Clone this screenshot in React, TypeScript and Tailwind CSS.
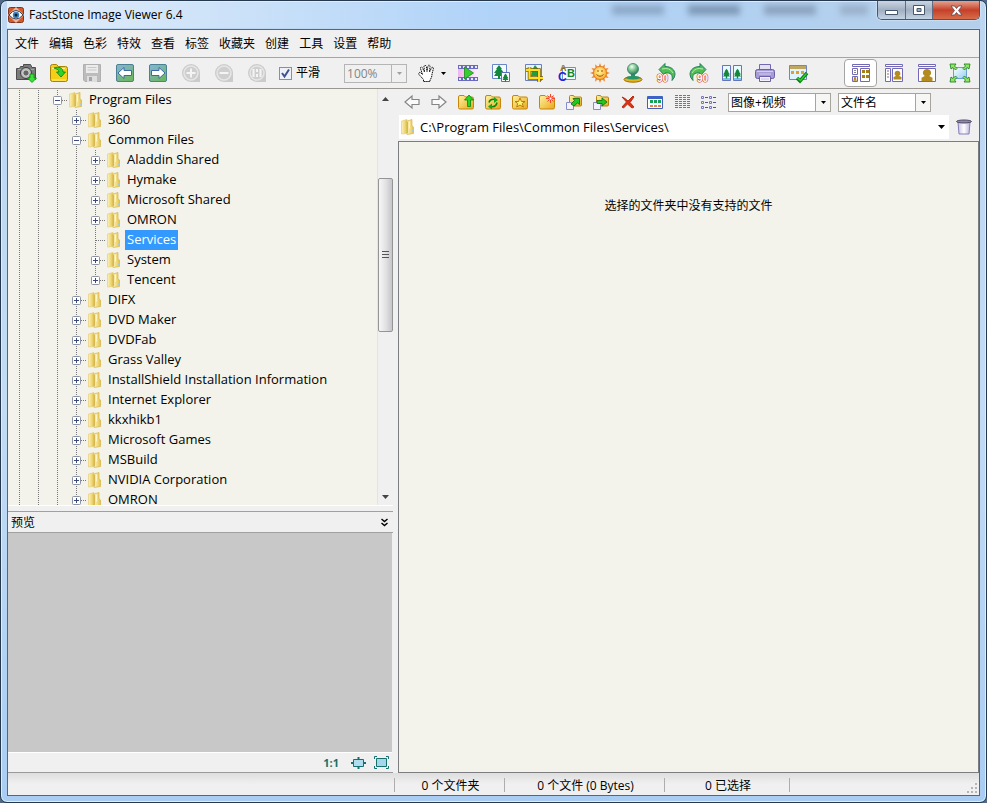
import React, { useState } from "react";

type Row = { name: string; depth: number; open?: boolean; leaf?: boolean; last?: boolean };

const rows: Row[] = [
  { name: "Program Files", depth: 2, open: true },
  { name: "360", depth: 3 },
  { name: "Common Files", depth: 3, open: true },
  { name: "Aladdin Shared", depth: 4 },
  { name: "Hymake", depth: 4 },
  { name: "Microsoft Shared", depth: 4 },
  { name: "OMRON", depth: 4 },
  { name: "Services", depth: 4, leaf: true },
  { name: "System", depth: 4 },
  { name: "Tencent", depth: 4, last: true },
  { name: "DIFX", depth: 3 },
  { name: "DVD Maker", depth: 3 },
  { name: "DVDFab", depth: 3 },
  { name: "Grass Valley", depth: 3 },
  { name: "InstallShield Installation Information", depth: 3 },
  { name: "Internet Explorer", depth: 3 },
  { name: "kkxhikb1", depth: 3 },
  { name: "Microsoft Games", depth: 3 },
  { name: "MSBuild", depth: 3 },
  { name: "NVIDIA Corporation", depth: 3 },
  { name: "OMRON", depth: 3 },
];

const menus = ["文件", "编辑", "色彩", "特效", "查看", "标签", "收藏夹", "创建", "工具", "设置", "帮助"];

function Icon({ size = 20, children }: { size?: number; children: React.ReactNode }) {
  return (
    <svg width={size} height={size} viewBox={`0 0 ${size} ${size}`} fill="none" aria-hidden="true" className="shrink-0 overflow-visible">
      {children}
    </svg>
  );
}

function Gradients() {
  return (
    <svg width="0" height="0" className="absolute" aria-hidden="true">
      <defs>
        <linearGradient id="gold" x1="0" y1="0" x2="1" y2="1">
          <stop offset="0" stopColor="#fff3a0" />
          <stop offset="1" stopColor="#e9a81c" />
        </linearGradient>
        <linearGradient id="folder" x1="0" y1="0" x2="1" y2="0">
          <stop offset="0" stopColor="#fbf1bd" />
          <stop offset="0.6" stopColor="#f0d878" />
          <stop offset="1" stopColor="#e0bf4c" />
        </linearGradient>
        <linearGradient id="nav" x1="0" y1="0" x2="0.6" y2="1">
          <stop offset="0" stopColor="#86b4df" />
          <stop offset="1" stopColor="#6cb765" />
        </linearGradient>
        <linearGradient id="film" x1="0" y1="0" x2="1" y2="0">
          <stop offset="0" stopColor="#f0b4ee" />
          <stop offset="1" stopColor="#fdeefb" />
        </linearGradient>
        <linearGradient id="bin" x1="0" y1="0" x2="1" y2="0">
          <stop offset="0" stopColor="#c8c5e2" />
          <stop offset="0.5" stopColor="#ffffff" />
          <stop offset="1" stopColor="#b9b5dc" />
        </linearGradient>
        <linearGradient id="sky" x1="0" y1="0" x2="1" y2="1">
          <stop offset="0" stopColor="#ffffff" />
          <stop offset="1" stopColor="#8fd0f2" />
        </linearGradient>
        <radialGradient id="ball" cx="0.4" cy="0.3" r="0.7">
          <stop offset="0" stopColor="#f2fff2" />
          <stop offset="0.5" stopColor="#7cc58c" />
          <stop offset="1" stopColor="#2a7a5c" />
        </radialGradient>
        <radialGradient id="sun" cx="0.45" cy="0.4" r="0.6">
          <stop offset="0" stopColor="#fff29a" />
          <stop offset="1" stopColor="#fbb02c" />
        </radialGradient>
      </defs>
    </svg>
  );
}

const Camera = () => (
  <Icon>
    <path d="M.5 5.500h3l1-2h3v-2h7l1.500 3h3.500v12H.5z" fill="#7b7b7b" stroke="#4d4d4d" />
    <path d="M2 6.500h16" stroke="#a5a5a5" />
    <circle cx="10" cy="10" r="5.5" fill="#b9b9b9" stroke="#3c3c3c" />
    <circle cx="10" cy="10" r="3.2" fill="#666" stroke="#ddd" />
    <path d="M14 11h4v4h2.500l-4.500 4.500L11.500 15H14z" fill="#3be03b" stroke="#0a8a0a" strokeWidth=".8" />
  </Icon>
);
const OpenFolder = () => (
  <Icon>
    <path d="M1.500 3.500q0-2 2-2h4l2 2h7q2 0 2 2v11q0 2-2 2h-13q-2 0-2-2z" fill="#f5cf17" stroke="#a98306" />
    <path d="M3 5.500h13M3 17h14" stroke="#fff08a" />
    <path d="M5 5c5-2 9 0 9 4h2.500L12 14 7.500 9H10c0-2-2-3-5-4z" fill="#2fd32f" stroke="#087c08" strokeWidth=".8" />
  </Icon>
);
const Save = () => (
  <Icon>
    <path d="M1.500 1.500h17v17H3l-1.500-1.500z" fill="#bcbcbc" stroke="#b0b0b0" />
    <path d="M4 2h12v8H4z" fill="#ececec" />
    <path d="M5.500 4.500h9M5.500 7h9" stroke="#c8c8c8" />
    <path d="M5 13h10v6H5z" fill="#dedede" />
    <path d="M7 14h3v4H7z" fill="#a5a5a5" />
  </Icon>
);
const Nav = ({ right }: { right?: boolean }) => (
  <Icon>
    <rect x="1.500" y="1.500" width="17" height="17" rx="1.500" fill="url(#nav)" stroke="#4b7f94" />
    <g transform={right ? "translate(20 0) scale(-1 1)" : undefined}>
      <path d="M3 10 9 4.500V7.500h7.500v5H9v3z" fill="#fff" stroke="#3d68a8" />
    </g>
  </Icon>
);
const Zoom = ({ kind }: { kind: "in" | "out" | "one" }) => (
  <Icon>
    <path d="M10 1a9 9 0 1 0 0 18h9v-9a9 9 0 0 0-9-9z" fill="#cbcbcb" />
    <circle cx="10" cy="10" r="7" fill="#cfcfcf" stroke="#e6e6e6" strokeWidth="1.500" />
    {kind === "one" ? (
      <path d="M6.500 6v8M13.500 6v8M10 6v3M10 11v3" stroke="#f4f4f4" strokeWidth="2" />
    ) : (
      <path d={kind === "in" ? "M5.500 10h9M10 5.500v9" : "M5.500 10h9"} stroke="#f4f4f4" strokeWidth="2" />
    )}
  </Icon>
);
const Hand = () => (
  <Icon>
    <path
      d="M6.500 18.500v-2L2 11.500c-1-2 1-2.500 2-1.500l1.500 1.500-2-6c-.5-1.500 1.500-2 2-.5l2 4L7 3.500C7 2 9 2 9.300 3.500L10 8.500l1-5.500c.5-1.500 2-1 2 .5l-.5 5.500L14.500 5c.7-1.500 2.200-.5 1.800 1l-1.300 5c0 2-.5 4-2 6v1.500z"
      fill="#fff"
      stroke="#111"
      strokeDasharray="1.500 .6"
    />
  </Icon>
);
const Film = () => (
  <Icon>
    <path d="M0 2h20v16H0z" fill="#6a6ac0" />
    <path d="M0 6h20v8H0z" fill="url(#film)" />
    <path d="M1 4h19M1 16h19" stroke="#e9e9ff" strokeWidth="2" strokeDasharray="2 2" />
    <path d="M6.500 4v12l9-6z" fill="#35cf2d" stroke="#178a17" strokeWidth=".8" />
  </Icon>
);
const Tree = ({ x, y, s = 1 }: { x: number; y: number; s?: number }) => (
  <path transform={`translate(${x} ${y}) scale(${s})`} d="M0-6 3-2H2l3 4H3l2 3H1v3h-2V5h-4l2-3h-2l3-4h-1z" fill="#13873b" />
);
const Resize = () => (
  <Icon>
    <path d="M1.500 1.500h14v14h-14z" fill="#f2fbff" stroke="#6a86c8" />
    <Tree x={8} y={8} />
    <path d="M10.500 9.500h8v9h-8z" fill="#fff" stroke="#5a6fbf" />
    <Tree x={14.5} y={14} s={0.6} />
  </Icon>
);
const Crop = () => (
  <Icon>
    <path d="M1.500 1.500h16v16h-16z" fill="#e4f6ff" stroke="#6a7fc6" />
    <path d="M8 7 11 2l5 6v5H7z" fill="#249a43" />
    <path d="M5.500 4v11H19M2 7h13v12" stroke="#7a5f00" strokeWidth="3.500" />
    <path d="M5.500 4v11H19M2 7h13v12" stroke="#ffdf1c" strokeWidth="2" />
  </Icon>
);
const Letters = () => (
  <Icon>
    <path d="M5.500 4.500h13v12h-13z" fill="#f1fbff" stroke="#6c8dd0" />
    <text x="3" y="8" fontSize="9" fontWeight="bold" fill="#8a6d1c" fontFamily="Liberation Sans, sans-serif">A</text>
    <text x="1" y="18" fontSize="12" fontWeight="bold" fill="#2020d8" fontFamily="Liberation Sans, sans-serif">C</text>
    <text x="10" y="14" fontSize="11" fontWeight="bold" fill="#138524" fontFamily="Liberation Sans, sans-serif">B</text>
  </Icon>
);
const Sun = () => (
  <Icon>
    {[0, 30, 60, 90, 120, 150, 180, 210, 240, 270, 300, 330].map((a) => (
      <path key={a} d="M10 0 12 5H8z" transform={`rotate(${a} 10 10)`} fill="#f08a3a" />
    ))}
    <circle cx="10" cy="10" r="6.500" fill="url(#sun)" stroke="#e07f1e" />
    <path d="M8 7v2M12 7v2M6.500 11.500q3.500 3.500 7 0" stroke="#a64d08" />
  </Icon>
);
const Stamp = () => (
  <Icon>
    <ellipse cx="10" cy="16.500" rx="9" ry="2.700" fill="#e8b418" stroke="#9a6c08" />
    <path d="M2 15q2-2 6-2v-2h4v2q4 0 6 2-8 3-16 0z" fill="#25966a" />
    <circle cx="10" cy="6" r="5.500" fill="url(#ball)" stroke="#367c68" strokeWidth=".8" />
  </Icon>
);
const Rotate = ({ right }: { right?: boolean }) => (
  <Icon>
    <g transform={right ? "translate(20 0) scale(-1 1)" : undefined}>
      <path d="M3 6.500 9 .5v3c6 0 10 3 10 8q0 3-3 6c1-6-1-8-7-7.500v3z" fill="#4fbf52" stroke="#1f7560" strokeWidth=".9" />
      <path d="M6 6q8-2 11 4" stroke="#b4efa8" />
    </g>
    <text x={right ? 8 : 1} y="19" fontSize="10" fontWeight="bold" fill="#fff" stroke="#d9441f" strokeWidth="1.200" paintOrder="stroke" fontFamily="Liberation Sans, sans-serif">90</text>
  </Icon>
);
const Compare = () => (
  <Icon>
    <path d="M.5 2.500h8v15h-8zM11.500 2.500h8v15h-8z" fill="#e7faff" stroke="#6574bd" />
    <path d="M1 15h7v2H1zM12 15h7v2h-7z" fill="#7ac5f1" />
    <Tree x={4.5} y={10} s={0.7} />
    <Tree x={15.5} y={10} s={0.7} />
  </Icon>
);
const Printer = () => (
  <Icon>
    <path d="M4.500 8V1.500h11V8" fill="#e2e1f2" stroke="#7368b1" />
    <rect x=".5" y="6.500" width="19" height="9" rx="2" fill="#a79cd3" stroke="#6a5ea8" />
    <path d="M2 8.500h16M4 11h12" stroke="#d3cdee" />
    <path d="M4.500 13.500h11v5h-11z" fill="#f4f1ff" stroke="#6c5eab" />
    <path d="M6 16h8" stroke="#c4bee1" />
  </Icon>
);
const Batch = () => (
  <Icon>
    <path d="M1.500 2.500h17v14h-17z" fill="#dff3ff" stroke="#7385bb" />
    <path d="M2 3h16v3H2z" fill="#bfa761" />
    <path d="M3 8h3v3H3zM8 8h3v3H8zM13 8h3v3h-3z" fill="#e0a12b" />
    <path d="m9 15 3 3 7-8" stroke="#0b7d14" strokeWidth="3.500" />
    <path d="m9.500 15 3 2.500 6-7" stroke="#31ce31" strokeWidth="1.500" />
  </Icon>
);
const Person = ({ x, y, s = 1 }: { x: number; y: number; s?: number }) => (
  <path transform={`translate(${x} ${y}) scale(${s})`} d="M0-6a3.500 3.500 0 0 1 2 6.500l3 1.500v3h-10V2l3-1.500A3.500 3.500 0 0 1 0-6z" fill="#b48b20" />
);
const Layout = ({ kind }: { kind: number }) => (
  <Icon>
    <path d="M1.500 1.500h17v2h-17z" fill="#fff" stroke="#7168b7" />
    {kind === 0 && (
      <>
        <path d="M1.500 5.500h5v6h-5zM1.500 13.500h5v5h-5zM9.500 5.500h9v13h-9z" fill="#fff" stroke="#7168b7" />
        <path d="M3 7.500h2M3 9.500h2" stroke="#888" />
        <path d="M11 7h3v3h-3zM15 7h3v3h-3zM11 12h3v3h-3zM15 12h3v3h-3z" fill="#a57e18" />
        <Person x={4} y={16} s={0.35} />
      </>
    )}
    {kind === 1 && (
      <>
        <path d="M1.500 5.500h5v13h-5zM8.500 5.500h10v13h-10z" fill="#fff" stroke="#7168b7" />
        <path d="M3 8h2M3 11h2M3 14h2" stroke="#777" />
        <Person x={13.5} y={12.5} s={0.8} />
      </>
    )}
    {kind === 2 && (
      <>
        <path d="M1.500 5.500h17v13h-17z" fill="#fff" stroke="#7168b7" />
        <Person x={10} y={12.5} s={1.1} />
      </>
    )}
  </Icon>
);
const FullScreen = () => (
  <Icon>
    <path d="M3.500 4.500h13v11h-13z" fill="url(#sky)" stroke="#6d9fd6" />
    <path d="M0 1h6L4.500 3 7 5.500 5.500 7 3 4.500 1 6zM20 1h-6l1.500 2L13 5.500 14.500 7 17 4.500 19 6zM0 19h6l-1.500-2L7 14.500 5.500 13 3 15.500 1 14zM20 19h-6l1.500-2-2.500-2.500 1.500-1.500 2.500 2.500 2-1.500z" fill="#8fe860" stroke="#147718" strokeWidth=".8" />
  </Icon>
);

const Arrow = ({ right }: { right?: boolean }) => (
  <Icon size={16}>
    <g transform={right ? "translate(16 0) scale(-1 1)" : undefined}>
      <path d="M1 8 8 2v3.500h7v5H8V14z" fill="#fafafa" stroke="#858585" strokeWidth="1.200" />
    </g>
  </Icon>
);
const SmallFolder = ({ children }: { children: React.ReactNode }) => (
  <Icon size={16}>
    <path d="M.5 3q0-1.500 1.500-1.500h4l1.500 1.500h6.500q1.500 0 1.500 1.500v9q0 1.500-1.500 1.500h-12q-1.500 0-1.500-1.500z" fill="url(#gold)" stroke="#c4860b" />
    {children}
  </Icon>
);
const UpFolder = () => (
  <SmallFolder>
    <path d="M9.500 12.500V6H6.500L11 1 15.500 6H12.500v6.500z" fill="#22d822" stroke="#0b850b" strokeWidth=".8" />
  </SmallFolder>
);
const Refresh = () => (
  <SmallFolder>
    <path d="M4 8.500q1-4 6-3M12 8.500q-1 5-6 4" stroke="#0a870a" strokeWidth="1.500" />
    <path d="m9 3 4 3-4 3zM7 9.500l-4 3 4 3z" fill="#16a916" />
  </SmallFolder>
);
const StarFolder = () => (
  <SmallFolder>
    <path d="m8 4 1.500 3.500H13l-2.700 2 1 3.500L8 11 4.700 13l1-3.500L3 7.500h3.500z" fill="#fff56b" stroke="#b56f06" strokeWidth=".9" />
  </SmallFolder>
);
const NewFolder = () => (
  <SmallFolder>
    <path d="M11.500 0v9M7 4.500h9M8.500 1.500l6 6M14.500 1.500l-6 6" stroke="#f1492e" />
    <path d="M10.500 3.500h2v2h-2z" fill="#fff" />
  </SmallFolder>
);
const Transfer = ({ move }: { move?: boolean }) => (
  <Icon size={16}>
    <path d="M3.500 2.500q0-1 1-1h3l1 1.500h6q1 0 1 1v7q0 1-1 1h-9q-2 0-2-2z" fill="url(#gold)" stroke="#b98210" />
    <path d="M.5 8.500h5l2 2v5h-7z" fill="#f2f2ff" stroke="#8b8bc7" />
    {move ? (
      <path d="M4 6.500h5V4l5 4-5 4V9.500H4z" fill="#22c722" stroke="#07690b" strokeWidth=".8" />
    ) : (
      <path d="m5 10 3.500-3.500L7 4.500h6.500v6L11.500 9 8 12z" fill="#22c722" stroke="#07690b" strokeWidth=".8" />
    )}
  </Icon>
);
const Delete = () => (
  <Icon size={16}>
    <path d="M2 3q3 1 6 4l5-5 1 1-4 5.500 4 4.500-2 1-4.500-4L3.500 14 2 13l4.500-5z" fill="#db3213" stroke="#bc2b11" />
  </Icon>
);
const Thumbs = () => (
  <Icon size={16}>
    <path d="M.5 2.500h15v12H.5z" fill="#fff" stroke="#3e5fc0" />
    <path d="M1 2h14v3H1z" fill="#3e62c6" />
    <path d="M3 6h3v3H3zM7 6h3v3H7zM11 6h3v3h-3z" fill="#15a154" />
    <path d="M3 11h3v2H3zM7 11h3v2H7zM11 11h3v2h-3z" fill="#e0834d" />
  </Icon>
);
const Details = () => (
  <Icon size={16}>
    <path d="M1 1.500h15M1 3.500h15M1 5.500h15M1 7.500h15M1 9.500h15M1 11.500h15M1 13.500h15" stroke="#6a70c4" strokeDasharray="3 1" />
  </Icon>
);
const ListIcon = () => (
  <Icon size={16}>
    <path d="M.5 2.500h2v2h-2zM8.500 2.500h2v2h-2zM.5 7.500h2v2h-2zM8.500 7.500h2v2h-2zM.5 12.500h2v2h-2zM8.500 12.500h2v2h-2z" stroke="#7778ba" />
    <path d="M4 3.500h3M12 3.500h3M4 8.500h3M12 8.500h3M4 13.500h3M12 13.500h3" stroke="#555794" />
  </Icon>
);
const TreeFolder = () => (
  <svg width="19" height="20" viewBox="0 0 19 20" className="shrink-0" aria-hidden="true">
    <path d="M2.500 4 8 2.500v14l-5.500.5z" fill="url(#folder)" stroke="#e6cf7c" strokeWidth=".7" />
    <path d="m8 4 5-1.500V9l1.500 1v6.500L8 17.500z" fill="url(#folder)" stroke="#d6b64c" strokeWidth=".7" />
    <path d="M8.500 5v11" stroke="#d2ae3e" strokeWidth=".8" />
    <path d="M10.500 4.500v7" stroke="#fff6c8" />
    <path d="M13.500 13v2" stroke="#a9d0d8" />
  </svg>
);
const Caret = ({ color = "#000", className = "" }: { color?: string; className?: string }) => (
  <svg width="7" height="4" viewBox="0 0 7 4" className={className} aria-hidden="true">
    <path d="M0 0h7L3.500 4z" fill={color} />
  </svg>
);

function ToolButton({ label, disabled, small, active, children }: { label: string; disabled?: boolean; small?: boolean; active?: boolean; children: React.ReactNode }) {
  const size = small ? "h-6 w-[27px]" : "h-7 w-[33px]";
  const look = active ? "rounded border border-[#a5a5a5] bg-white" : "";
  return (
    <button type="button" title={label} aria-label={label} disabled={disabled} className={`flex shrink-0 items-center justify-center ${size} ${look}`}>
      {children}
    </button>
  );
}

function Combo({ id, label, options, width, disabled }: { id: string; label: string; options: string[]; width: string; disabled?: boolean }) {
  return (
    <div className={`relative h-[19px] shrink-0 ${width}`}>
      <label htmlFor={id} className="sr-only">{label}</label>
      <select
        id={id}
        disabled={disabled}
        className={`block h-full w-full appearance-none border pl-0.5 text-xs leading-[17px] opacity-100 ${disabled ? "border-[#b5b5b5] bg-[#f0f0f0] text-[#858585]" : "border-[#a7a59b] bg-white text-black"}`}
      >
        {options.map((o) => <option key={o}>{o}</option>)}
      </select>
      <span className={`pointer-events-none absolute inset-y-px right-px flex w-[15px] items-center justify-center border-l ${disabled ? "border-[#b5b5b5]" : "border-[#a7a59b] bg-[#f6f6f4]"}`}>
        <Caret color={disabled ? "#a0a0a0" : "#000"} className="h-[3px] w-[5px]" />
      </span>
    </div>
  );
}

function TreeRow({ row, selected, onSelect }: { row: Row; selected: boolean; onSelect: () => void }) {
  const dots = { stroke: "#777", strokeDasharray: "1 1" };
  return (
    <li className="flex h-5 items-center">
      {Array.from({ length: row.depth }, (_, i) => (
        <svg key={i} width="19" height="20" className="shrink-0" aria-hidden="true">
          <path d="M9.500 0v20" {...dots} />
        </svg>
      ))}
      <button type="button" tabIndex={row.leaf ? -1 : 0} aria-label={`${row.open ? "折叠" : "展开"} ${row.name}`} className="shrink-0">
        <svg width="19" height="20" className="block" fill="none" aria-hidden="true">
          <path d={row.last ? "M9.500 0v10" : "M9.500 0v20"} {...dots} />
          <path d="M10 10.500h9" {...dots} />
          {!row.leaf && (
            <>
              <rect x="5.500" y="6.500" width="8" height="8" rx="1" fill="#fff" stroke="#8d93a3" />
              <path d={row.open ? "M7 10.500h5" : "M7 10.500h5M9.500 8v5"} stroke="#3b4a7e" />
            </>
          )}
        </svg>
      </button>
      <TreeFolder />
      <button type="button" onClick={onSelect} className={`ml-px h-5 whitespace-nowrap px-0.5 pb-0.5 text-[13px] leading-[18px] ${selected ? "bg-[#3399ff] text-white" : "text-black"}`}>
        {row.name}
      </button>
    </li>
  );
}

export default function App() {
  const [selected, setSelected] = useState(7);
  return (
    <div className="flex h-screen flex-col overflow-hidden bg-[#51698a] font-['Open_Sans','Noto_Sans_CJK_SC',sans-serif] text-xs text-black">
      <Gradients />
      <div className="flex min-h-0 flex-1 flex-col overflow-hidden rounded-[7px] border border-[#26384d] bg-linear-to-b from-[#bcd6f2] via-[#c3dcf5] to-[#a9cdf2] px-1.5 pb-1.5 shadow-[inset_0_0_0_1px_#d9effc]">
        <header className="relative flex h-7 shrink-0 items-start justify-between">
          <div className="absolute inset-x-0 inset-y-px bg-linear-to-r from-[#e4eef9] via-[#b0d3f8] to-[#b4cfea]" />
          <div className="absolute right-28 top-1 flex gap-6 blur-[3px]" aria-hidden="true">
            <span className="h-2.5 w-13 bg-[#8ea9c8]" />
            <span className="h-2.5 w-13 bg-[#7f99b7]" />
            <span className="h-2.5 w-13 bg-[#8ba3bf]" />
            <span className="h-2.5 w-7 bg-[#9bb1cb]" />
          </div>
          <div className="relative flex h-7 items-center gap-[5px] pl-px">
            <Icon size={16}>
              <rect x=".5" y=".5" width="15" height="15" rx="2" fill="#d65a2c" stroke="#7b3721" />
              <path d="m8 0 8 8-8 8-8-8z" fill="#efb597" />
              <path d="M1 8q7-9 14 0-7 8-14 0z" fill="#fff" stroke="#343f50" />
              <circle cx="8" cy="8" r="3.200" fill="#3a83bc" />
              <circle cx="8" cy="8" r="1.500" fill="#071f38" />
            </Icon>
            <h1 className="text-xs leading-4">FastStone Image Viewer 6.4</h1>
          </div>
          <div className="relative flex h-[19px] overflow-hidden rounded-b-[5px] border border-t-0 border-[#46566c] shadow-[0_0_2px_#fff]">
            <button type="button" aria-label="最小化" className="flex w-7 items-center justify-center border-r border-[#5d6d83] bg-linear-to-b from-[#cbd6e3] via-[#a0afc1] to-[#c3d4e5] pt-1.5">
              <svg width="13" height="6" aria-hidden="true"><path d="M.5.5h12v4H.5z" fill="#fff" stroke="#46566b" /></svg>
            </button>
            <button type="button" aria-label="最大化" className="flex w-[27px] items-center justify-center border-r border-[#5d6d83] bg-linear-to-b from-[#cbd6e3] via-[#a0afc1] to-[#c3d4e5]">
              <svg width="12" height="10" aria-hidden="true"><path d="M.5.5h11v9H.5z" fill="#fff" stroke="#46566b" /><path d="M4 3.500h4v3H4z" fill="#9cafbf" stroke="#46566b" /></svg>
            </button>
            <button type="button" aria-label="关闭" className="flex w-[46px] items-center justify-center bg-linear-to-b from-[#e3a18f] via-[#c53f27] to-[#d66c4a]">
              <svg width="13" height="11" aria-hidden="true"><path d="M1 1h3.500l2 2.500 2-2.500H12L8.500 5.500 12 10H8.500l-2-2.500-2 2.500H1l3.500-4.500z" fill="#fff" stroke="#65424a" strokeWidth=".8" /></svg>
            </button>
          </div>
        </header>

        <div className="flex min-h-0 flex-1 flex-col border border-[#576777] bg-[#f0f0f0]">
          <nav className="flex h-7 shrink-0 items-center gap-2.5 border-b border-[#a8a49f] px-[7px] pt-px">
            {menus.map((m) => <button type="button" key={m} className="leading-4">{m}</button>)}
          </nav>

          <div role="toolbar" aria-label="工具栏" className="flex h-[31px] shrink-0 items-center border-b border-[#9b9790] pl-px pr-[3px]">
            <ToolButton label="下载照片"><Camera /></ToolButton>
            <ToolButton label="打开"><OpenFolder /></ToolButton>
            <ToolButton label="保存" disabled><Save /></ToolButton>
            <ToolButton label="上一个"><Nav /></ToolButton>
            <ToolButton label="下一个"><Nav right /></ToolButton>
            <ToolButton label="放大" disabled><Zoom kind="in" /></ToolButton>
            <ToolButton label="缩小" disabled><Zoom kind="out" /></ToolButton>
            <ToolButton label="实际大小" disabled><Zoom kind="one" /></ToolButton>
            <label className="ml-1.5 mr-6 flex items-center gap-1 whitespace-nowrap">
              <span className="relative flex">
                <input type="checkbox" defaultChecked className="peer size-[13px] appearance-none border border-[#8e8f8f] bg-[#eef1f7]" />
                <svg width="13" height="13" className="pointer-events-none absolute inset-0 opacity-0 peer-checked:opacity-100" fill="none" aria-hidden="true">
                  <path d="m3 6 2.500 3.500L10 2.500" stroke="#40508f" strokeWidth="2" />
                </svg>
              </span>
              平滑
            </label>
            <Combo id="zoom" label="缩放" options={["100%"]} width="w-[63px]" disabled />
            <button type="button" aria-label="手形工具" className="ml-2.5 flex w-[34px] shrink-0 items-center gap-1">
              <Hand /><Caret className="h-[3px] w-[5px]" />
            </button>
            <ToolButton label="幻灯片"><Film /></ToolButton>
            <ToolButton label="调整大小"><Resize /></ToolButton>
            <ToolButton label="裁剪"><Crop /></ToolButton>
            <ToolButton label="绘图板"><Letters /></ToolButton>
            <ToolButton label="光线"><Sun /></ToolButton>
            <ToolButton label="克隆"><Stamp /></ToolButton>
            <ToolButton label="左转"><Rotate /></ToolButton>
            <ToolButton label="右转"><Rotate right /></ToolButton>
            <ToolButton label="比较"><Compare /></ToolButton>
            <ToolButton label="打印"><Printer /></ToolButton>
            <ToolButton label="批量转换"><Batch /></ToolButton>
            <div className="ml-auto flex">
              <ToolButton label="浏览" active><Layout kind={0} /></ToolButton>
              <ToolButton label="窗口"><Layout kind={1} /></ToolButton>
              <ToolButton label="查看器"><Layout kind={2} /></ToolButton>
              <ToolButton label="全屏"><FullScreen /></ToolButton>
            </div>
          </div>

          <div className="flex min-h-0 flex-1">
            <aside className="mr-[5px] flex w-[385px] shrink-0 flex-col">
              <div className="flex min-h-0 flex-1 border-b border-white bg-[#f3f3eb]">
                <ul className="min-w-0 flex-1 overflow-hidden pl-0.5 pt-px" aria-label="文件夹">
                  {rows.map((r, i) => <TreeRow key={i} row={r} selected={i === selected} onSelect={() => setSelected(i)} />)}
                </ul>
                <div className="flex w-4 shrink-0 flex-col items-center border-l border-[#e4e4e4] bg-[#f0f0f0]" aria-hidden="true">
                  <Caret color="#444" className="my-2 shrink-0 rotate-180" />
                  <div className="mt-[69px] flex h-[154px] w-full shrink-0 items-center justify-center rounded-xs border border-[#949494] bg-linear-to-r from-[#f6f6f6] via-[#e3e3e5] to-[#c6c6ca]">
                    <svg width="7" height="8"><path d="M0 .5h7M0 3.500h7M0 6.500h7" stroke="#555" /></svg>
                  </div>
                  <Caret color="#444" className="mb-1.5 mt-auto shrink-0" />
                </div>
              </div>
              <div className="mt-[5px] flex h-[22px] shrink-0 items-center justify-between border-y border-[#a0a0a0] pl-[3px] pr-[5px]">
                <h2 className="pt-0.5 leading-4">预览</h2>
                <button type="button" aria-label="折叠预览">
                  <svg width="7" height="9" fill="none" className="block" aria-hidden="true"><path d="m.5 1 3 2.500 3-2.500M.5 5l3 2.500 3-2.500" stroke="#000" strokeWidth="1.500" /></svg>
                </button>
              </div>
              <div className="mr-px h-[220px] shrink-0 border-b border-white bg-[#c8c8c8]" />
              <div className="flex h-5 shrink-0 items-center justify-end gap-2 border-b border-[#9a9a9a] pr-1 text-[#17706d]">
                <button type="button" className="pr-1 text-[11px] font-bold leading-4">1:1</button>
                <button type="button" aria-label="适合窗口">
                  <svg width="15" height="12" fill="none" className="block" aria-hidden="true">
                    <path d="M2.500 2.500h10v7h-10z" fill="#b0dcef" stroke="currentColor" /><path d="M0 6h3M12 6h3M7.500 0v3M7.500 9v3" stroke="currentColor" strokeWidth="2" />
                  </svg>
                </button>
                <button type="button" aria-label="全部显示">
                  <svg width="15" height="13" fill="none" className="block" aria-hidden="true">
                    <path d="M2.500 2.500h10v8h-10z" fill="#a5d7ea" stroke="currentColor" /><path d="M.5 3V.5H3M12 .5h2.500V3M.5 10v2.500H3M12 12.500h2.500V10" stroke="currentColor" />
                  </svg>
                </button>
              </div>
            </aside>

            <main className="flex min-w-0 flex-1 flex-col">
              <div role="toolbar" aria-label="文件操作" className="flex h-[26px] shrink-0 items-center">
                <div className="flex">
                  <ToolButton label="后退" small><Arrow /></ToolButton>
                  <ToolButton label="前进" small><Arrow right /></ToolButton>
                  <ToolButton label="向上" small><UpFolder /></ToolButton>
                  <ToolButton label="刷新" small><Refresh /></ToolButton>
                  <ToolButton label="收藏夹" small><StarFolder /></ToolButton>
                  <ToolButton label="新建文件夹" small><NewFolder /></ToolButton>
                  <ToolButton label="复制到" small><Transfer /></ToolButton>
                  <ToolButton label="移动到" small><Transfer move /></ToolButton>
                  <ToolButton label="删除" small><Delete /></ToolButton>
                  <ToolButton label="缩略图" small><Thumbs /></ToolButton>
                  <ToolButton label="详细信息" small><Details /></ToolButton>
                  <ToolButton label="列表" small><ListIcon /></ToolButton>
                </div>
                <div className="ml-1.5 flex gap-[7px]">
                  <Combo id="filter" label="筛选" options={["图像+视频", "图像"]} width="w-[103px]" />
                  <Combo id="sort" label="排序" options={["文件名", "文件大小"]} width="w-[93px]" />
                </div>
              </div>
              <div className="flex h-[26px] shrink-0 items-start">
                <div className="ml-px flex h-6 min-w-0 flex-1 items-center bg-white pr-1">
                  <TreeFolder />
                  <label htmlFor="path" className="sr-only">路径</label>
                  <input id="path" defaultValue="C:\Program Files\Common Files\Services\" className="ml-0.5 min-w-0 flex-1 bg-transparent text-[13px] leading-5 outline-none" />
                  <button type="button" aria-label="历史路径"><Caret className="block" /></button>
                </div>
                <button type="button" aria-label="删除的文件" className="flex h-6 w-[30px] shrink-0 items-center justify-center">
                  <Icon size={16}>
                    <path d="M2 3h12l-1 12H3z" fill="url(#bin)" stroke="#8580ba" />
                    <ellipse cx="8" cy="2.500" rx="7.500" ry="1.500" fill="#8d89ac" stroke="#4b4861" />
                  </Icon>
                </button>
              </div>
              <section className="flex min-h-0 flex-1 justify-center border border-[#7b7d80] bg-[#f3f3eb] pt-14">
                <p className="leading-4">选择的文件夹中没有支持的文件</p>
              </section>
            </main>
          </div>

          <footer className="flex h-[22px] shrink-0 items-center bg-linear-to-b from-[#dedede] via-[#f0f0f0] to-[#f0f0f0] pt-0.5 text-center leading-4">
            <span className="h-3.5 w-[387px] border-r border-[#adadad]" />
            <span className="flex h-3.5 w-[110px] items-center justify-center border-r border-[#adadad] pl-0.5 pt-0.5">0 个文件夹</span>
            <span className="flex h-3.5 w-40 items-center justify-center border-r border-[#adadad] pl-0.5 pt-0.5">0 个文件 (0 Bytes)</span>
            <span className="flex h-3.5 w-[125px] items-center justify-center border-r border-[#adadad] pl-0.5 pt-0.5">0 已选择</span>
            <svg width="12" height="12" className="ml-auto self-end" aria-hidden="true">
              <path d="M8 0h2v2H8zM4 4h2v2H4zM8 4h2v2H8zM0 8h2v2H0zM4 8h2v2H4zM8 8h2v2H8z" fill="#b5b5b5" />
            </svg>
          </footer>
        </div>
      </div>
    </div>
  );
}
